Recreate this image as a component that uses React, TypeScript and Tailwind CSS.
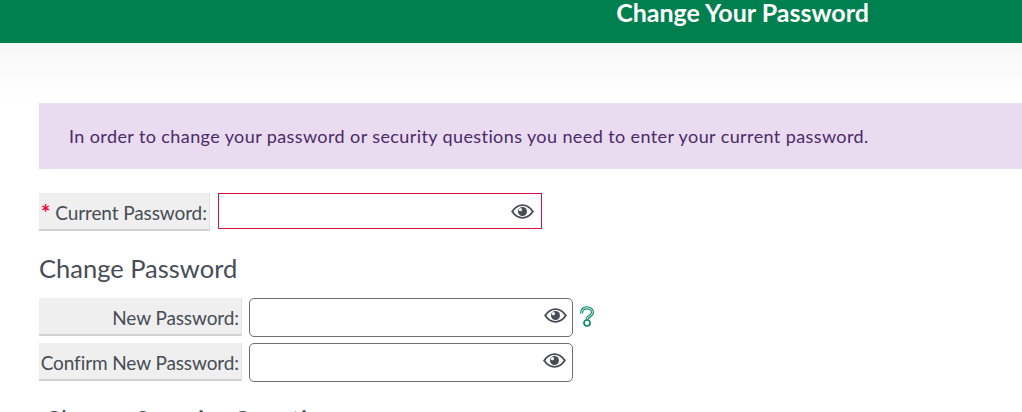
import React from "react";

function Eye() {
  return (
    <svg viewBox="0 0 24 16" width="23" height="15" fill="none">
      <path d="M1 8C4 3.600 7.600 1.200 12 1.200S20 3.600 23 8c-3 4.400-6.600 6.800-11 6.800S4 12.400 1 8Z" stroke="#474c55" strokeWidth="2" />
      <circle cx="12" cy="8" r="4.800" fill="#474c55" />
      <circle cx="9.800" cy="6" r="1.700" fill="#fff" />
    </svg>
  );
}

function Label({ w, children, right }: { w: string; children: React.ReactNode; right?: boolean }) {
  return (
    <div className={`${w} flex h-[38px] items-center border-b-2 border-r border-[#d2d2d2] border-r-[#e2e2e2] bg-[#efefef] pl-[1px] pr-[1px] pt-[3px] text-[19px] leading-none tracking-[-0.1px] text-[#474c55] whitespace-nowrap ${right ? "justify-end" : ""}`}>
      {children}
    </div>
  );
}

function PasswordField({ extra }: { extra: string }) {
  return (
    <div className={`flex items-center justify-end bg-white ${extra}`}>
      <Eye />
    </div>
  );
}

export default function App() {
  return (
    <div className="h-[412px] w-[1022px] overflow-hidden bg-white font-['Lato','Liberation_Sans',sans-serif] text-[#474c55]">
      <header className="flex h-[43px] justify-center bg-[#007f4f] pl-[463px]">
        <h1 className="text-[25px] font-bold leading-[25px] text-white whitespace-nowrap">Change Your Password</h1>
      </header>
      <div className="h-[60px] bg-gradient-to-b from-[#f7f7f7] to-white" />
      <main className="pl-[39px]">
        <div className="flex h-[66px] items-center bg-[#e9dbf0] pl-[30px] text-[18px] tracking-[0.4px] text-[#4b2a68] whitespace-nowrap">
          In order to change your password or security questions you need to enter your current password.
        </div>
        <div className="mt-[24px] flex items-start gap-[8px]">
          <Label w="w-[171px]">
            <span className="ml-[1px] mr-[5px] text-[22px] font-bold leading-none text-[#f0003c]">*</span>
            <span>Current Password:</span>
          </Label>
          <PasswordField extra="h-[36px] w-[324px] border border-[#d90f3f] pr-[7px]" />
        </div>
        <h2 className="mt-[21px] text-[25.5px] font-normal leading-[32px] text-[#474c55]">Change Password</h2>
        <div className="mt-[14px] flex items-start gap-[7px]">
          <Label w="w-[203px]" right><span className="mr-[1px]">New Password:</span></Label>
          <div className="flex items-start">
            <PasswordField extra="h-[39px] w-[324px] rounded-[5px] border border-[#6f6f6f] pr-[5px] pb-[5px]" />
            <svg viewBox="0 0 16 21" width="16" height="21" className="ml-[6px] mt-[8px]" fill="none">
              <path d="M2.500 7.500C2.500 3.800 4.800 1.800 8 1.800s5.500 2 5.500 4.700c0 3.400-5.500 3.700-5.500 7" stroke="#0f8a6c" strokeWidth="3.200" />
              <circle cx="8" cy="17" r="3" fill="#fff" stroke="#0f8a6c" strokeWidth="1.700" />
              <path d="M2.500 7.500C2.500 3.800 4.800 1.800 8 1.800s5.500 2 5.500 4.700c0 3.400-5.500 3.700-5.500 6.500" stroke="#fff" strokeWidth="0.900" />
            </svg>
          </div>
        </div>
        <div className="mt-[6px] flex items-start gap-[7px]">
          <Label w="w-[203px]" right><span className="mr-[1px]">Confirm New Password:</span></Label>
          <PasswordField extra="h-[39px] w-[324px] rounded-[5px] border border-[#6f6f6f] pr-[6px] pb-[5px]" />
        </div>
        <h2 className="ml-[5px] mt-[21px] text-[25.5px] font-normal leading-[32px] text-[#474c55] whitespace-nowrap">Change Security Questions</h2>
      </main>
    </div>
  );
}
